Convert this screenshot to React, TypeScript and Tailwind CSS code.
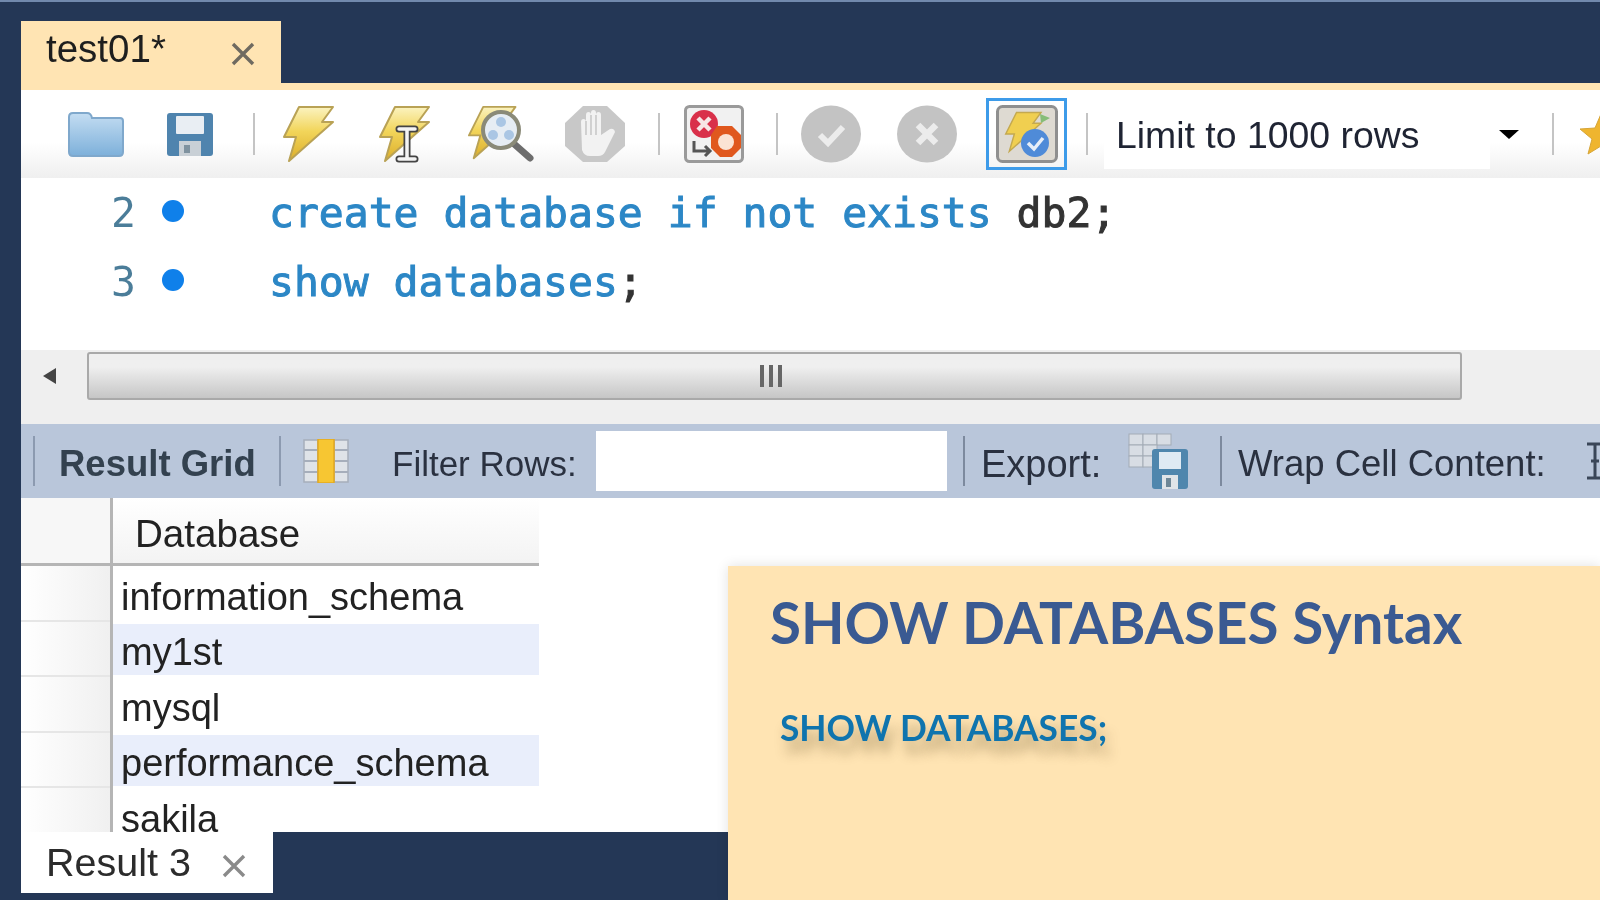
import React from 'react';

const SANS = 'font-["Liberation_Sans",Arial,sans-serif]';

const Sep = ({ ml, h = 'h-[42px]', color = 'bg-[#c4c4c4]' }: { ml: string; h?: string; color?: string }) => (
  <div className={`w-[2px] shrink-0 ${h} ${ml} ${color}`} />
);

const BoltShape = ({ x = 0, y = 0, s = 1 }: { x?: number; y?: number; s?: number }) => (
  <g transform={`translate(${x} ${y}) scale(${s})`}>
    <defs>
      <linearGradient id="boltFill" x1="0" y1="0" x2="0" y2="1">
        <stop offset="0" stopColor="#fbf3c0" />
        <stop offset="0.45" stopColor="#f2d55a" />
        <stop offset="1" stopColor="#dcae2a" />
      </linearGradient>
    </defs>
    <path d="M16 2 L50 2 L39 17 L50 17 L6 56 L13 32 L1 32 Z" fill="url(#boltFill)" stroke="#b9a255" strokeWidth="2" strokeLinejoin="round" />
  </g>
);

const Folder = () => (
  <svg width="58" height="46" viewBox="0 0 58 46" className="shrink-0">
    <defs>
      <linearGradient id="folderFill" x1="0" y1="0" x2="0" y2="1">
        <stop offset="0" stopColor="#c4ddf2" />
        <stop offset="1" stopColor="#7db0da" />
      </linearGradient>
    </defs>
    <path d="M2 6 Q2 2 6 2 L20 2 Q24 2 25 7 L53 7 Q56 7 56 10 L56 41 Q56 45 52 45 L6 45 Q2 45 2 41 Z" fill="url(#folderFill)" stroke="#7fa8cc" strokeWidth="2" />
  </svg>
);

const Save = ({ size = 48 }: { size?: number }) => (
  <svg width={size} height={size - 3} viewBox="0 0 48 45" className="shrink-0">
    <rect x="1" y="1" width="46" height="43" rx="3" fill="#4f84ae" />
    <rect x="10" y="4" width="28" height="18" rx="1" fill="#e9eef3" />
    <rect x="13" y="29" width="22" height="15" fill="#c9d0d6" />
    <rect x="18" y="33" width="6" height="8" fill="#7f929f" />
  </svg>
);

const Bolt = () => (
  <svg width="52" height="58" viewBox="0 0 52 58" className="shrink-0">
    <BoltShape />
  </svg>
);

const BoltCursor = () => (
  <svg width="54" height="58" viewBox="0 0 54 58" className="shrink-0">
    <BoltShape />
    <path d="M20 24 H36 M20 54 H36 M28 24 V54" stroke="#444" strokeWidth="7" strokeLinecap="round" />
    <path d="M20 24 H36 M20 54 H36 M28 24 V54" stroke="#f4f4f4" strokeWidth="3.5" strokeLinecap="round" />
  </svg>
);

const BoltSearch = () => (
  <svg width="66" height="58" viewBox="0 0 66 58" className="shrink-0">
    <BoltShape s={0.95} />
    <path d="M45 38 L62 53" stroke="#6d6d6d" strokeWidth="7" strokeLinecap="round" />
    <circle cx="33" cy="25" r="18" fill="#e6edf4" stroke="#8a8a78" strokeWidth="4" />
    <circle cx="33" cy="17" r="5" fill="#aac6e4" />
    <circle cx="25" cy="30" r="5" fill="#aac6e4" />
    <circle cx="41" cy="30" r="5" fill="#aac6e4" />
  </svg>
);

const HandStop = () => (
  <svg width="62" height="58" viewBox="0 0 62 58" className="shrink-0">
    <path d="M19 1 H43 L61 18 V41 L43 57 H19 L1 41 V18 Z" fill="#c8c8c8" />
    <path d="M17 17 Q17 14 19.5 14 Q22 14 22 17 V10 Q22 7 24.5 7 Q27 7 27 10 V8 Q27 5 29.5 5 Q32 5 32 8 V10 Q32 7 34.5 7 Q37 7 37 10 V30 L46 24 Q50 23 51 27 L41 47 Q39 51 34 51 H26 Q20 51 18 45 Z" fill="#f2f2f2" />
    <path d="M22 16 V30 M27 10 V30 M32 10 V30" stroke="#c8c8c8" strokeWidth="1.6" />
  </svg>
);

const StopOnError = () => (
  <svg width="60" height="58" viewBox="0 0 60 58" className="shrink-0">
    <rect x="1.5" y="1.5" width="57" height="55" rx="4" fill="#f1f1f1" stroke="#9a9a9a" strokeWidth="3" />
    <path d="M10 36 V46 H26 M21 41 L26 46 L21 51" fill="none" stroke="#555" strokeWidth="3" />
    <circle cx="20" cy="19" r="14" fill="#d9304a" />
    <path d="M14 13 L26 25 M26 13 L14 25" stroke="#f7e6e6" strokeWidth="4.5" />
    <path d="M33 21 H48 L57 30 V43 L48 52 H36 L27 43 V30 Z" fill="#e0581e" />
    <circle cx="42" cy="37" r="8" fill="#fbe3d4" />
  </svg>
);

const RoundBtn = ({ kind }: { kind: 'check' | 'x' }) => (
  <svg width="62" height="58" viewBox="0 0 62 58" className="shrink-0">
    <ellipse cx="31" cy="29" rx="30" ry="28.5" fill="#c3c3c3" />
    {kind === 'check' ? (
      <path d="M20 30 L28 38 L43 22" fill="none" stroke="#ececec" strokeWidth="6" />
    ) : (
      <path d="M22 20 L40 38 M40 20 L22 38" stroke="#ececec" strokeWidth="6.5" />
    )}
  </svg>
);

const ToggleAuto = () => (
  <div className="flex h-[72px] w-[81px] shrink-0 items-center justify-center border-[3px] border-[#3d9be9]">
    <svg width="62" height="58" viewBox="0 0 62 58">
      <rect x="1.5" y="1.5" width="59" height="55" rx="5" fill="#dedad2" stroke="#8f8f8f" strokeWidth="3" />
      <g transform="translate(9 6) scale(0.72)">
        <path d="M16 2 L50 2 L39 17 L50 17 L6 56 L13 32 L1 32 Z" fill="#f0cf50" stroke="#c4a94f" strokeWidth="2" />
      </g>
      <path d="M44 9 L54 13 L45 18 Z" fill="#86bd78" />
      <circle cx="39" cy="38" r="14" fill="#4f8bd8" />
      <path d="M32 38 L38 44 L47 33" fill="none" stroke="#e6eef8" strokeWidth="3.5" />
    </svg>
  </div>
);

const GridIcon = () => (
  <svg width="46" height="44" viewBox="0 0 46 44" className="shrink-0">
    <rect x="1" y="1" width="44" height="42" fill="#dfe3e8" stroke="#a6aebb" strokeWidth="1.5" />
    <path d="M1 11 H45 M1 22 H45 M1 33 H45 M15 1 V43 M31 1 V43" stroke="#a6aebb" strokeWidth="2" />
    <rect x="15" y="0" width="16" height="44" fill="#f7c632" stroke="#e4a91f" strokeWidth="1.5" />
  </svg>
);

const ExportIcon = () => (
  <svg width="64" height="57" viewBox="0 0 64 57" className="shrink-0">
    <g fill="#d8dde4" stroke="#a3abb6" strokeWidth="1">
      <rect x="1" y="1" width="14" height="11" /><rect x="15" y="1" width="14" height="11" /><rect x="29" y="1" width="14" height="11" />
      <rect x="1" y="12" width="14" height="11" /><rect x="15" y="12" width="14" height="11" />
      <rect x="1" y="23" width="14" height="11" /><rect x="15" y="23" width="14" height="11" />
    </g>
    <rect x="24" y="16" width="36" height="40" rx="3" fill="#4f86ad" />
    <rect x="31" y="19" width="22" height="17" fill="#dfeaf3" />
    <rect x="34" y="42" width="16" height="14" fill="#dfe4e8" />
    <rect x="38" y="45" width="5" height="9" fill="#6e8797" />
  </svg>
);

const WrapIcon = () => (
  <svg width="24" height="40" viewBox="0 0 24 40" className="shrink-0">
    <path d="M3 3 H19 M3 37 H19 M11 3 V37 M7 20 H15" stroke="#3a4658" strokeWidth="3" fill="none" />
  </svg>
);

const Star = () => (
  <svg width="44" height="44" viewBox="0 0 44 44" className="shrink-0">
    <path d="M22 2 L28 16 L43 17 L31 27 L35 42 L22 34 L9 42 L13 27 L1 17 L16 16 Z" fill="#efb52f" stroke="#d6a538" strokeWidth="1" />
  </svg>
);

const CloseX = ({ color, size }: { color: string; size: number }) => (
  <svg width={size} height={size} viewBox="0 0 24 24" className="shrink-0">
    <path d="M2 2 L22 22 M22 2 L2 22" stroke={color} strokeWidth="3.4" />
  </svg>
);

const rows = [
  { name: 'information_schema', alt: false },
  { name: 'my1st', alt: true },
  { name: 'mysql', alt: false },
  { name: 'performance_schema', alt: true },
  { name: 'sakila', alt: false },
];

export default function App() {
  return (
    <div className={`relative flex h-[900px] w-[1600px] flex-col overflow-hidden bg-[#243756] blur-[0.5px] ${SANS}`}>
      <div className="h-[2px] shrink-0 bg-[#7189ad]" />

      <div className="flex min-h-0 flex-1 flex-col pl-[21px] pt-[19px]">
        {/* document tab */}
        <div className="flex h-[62px] w-[260px] shrink-0 items-center bg-[#ffe4b3] pl-[25px] text-[38.5px] leading-none text-[#1e1e1e]">
          <span className="-mt-[5px] w-[185px]">test01*</span>
          <span className="mt-[4px]"><CloseX color="#6f6a60" size={24} /></span>
        </div>
        <div className="h-[7px] shrink-0 bg-[#ffe4b3]" />

        {/* sql editor toolbar */}
        <div className="flex h-[88px] shrink-0 items-center bg-gradient-to-b from-white from-60% to-[#efefef]">
          <div className="ml-[46px]"><Folder /></div>
          <div className="ml-[41px]"><Save /></div>
          <Sep ml="ml-[39px]" />
          <div className="ml-[28px]"><Bolt /></div>
          <div className="ml-[44px]"><BoltCursor /></div>
          <div className="ml-[35px]"><BoltSearch /></div>
          <div className="ml-[30px]"><HandStop /></div>
          <Sep ml="ml-[32px]" />
          <div className="ml-[24px]"><StopOnError /></div>
          <Sep ml="ml-[32px]" />
          <div className="ml-[22px]"><RoundBtn kind="check" /></div>
          <div className="ml-[34px]"><RoundBtn kind="x" /></div>
          <div className="ml-[28px]"><ToggleAuto /></div>
          <Sep ml="ml-[19px]" />
          <div className="ml-[16px] flex h-[70px] w-[386px] shrink-0 items-center bg-white pl-[12px] pt-[4px] text-[37.4px] leading-none text-[#1f2433]">
            Limit to 1000 rows
          </div>
          <div className="ml-[9px] h-0 w-0 shrink-0 border-x-[10px] border-t-[9px] border-x-transparent border-t-black" />
          <Sep ml="ml-[33px]" />
          <div className="ml-[25px]"><Star /></div>
        </div>

        {/* editor */}
        <div className="h-[172px] shrink-0 bg-white font-['DejaVu_Sans_Mono',monospace] text-[41.4px] leading-[68px] [-webkit-text-stroke:1px]">
          <div className="flex h-[70px] items-center">
            <span className="ml-[90px] w-[24px] text-[#4b7d99] [-webkit-text-stroke:0px]">2</span>
            <span className="-mt-[5px] ml-[27px] h-[22px] w-[22px] rounded-full bg-[#0f80ea]" />
            <span className="ml-[85px] whitespace-pre text-[#2c87c6]">
              create database if not exists <span className="text-[#333]">db2;</span>
            </span>
          </div>
          <div className="flex h-[68px] items-center">
            <span className="ml-[90px] w-[24px] text-[#4b7d99] [-webkit-text-stroke:0px]">3</span>
            <span className="-mt-[5px] ml-[27px] h-[22px] w-[22px] rounded-full bg-[#0f80ea]" />
            <span className="ml-[85px] whitespace-pre text-[#2c87c6]">
              show databases<span className="text-[#333]">;</span>
            </span>
          </div>
        </div>

        {/* horizontal scrollbar */}
        <div className="flex h-[74px] shrink-0 items-center bg-[#efefef] pb-[24px] pt-[2px]">
          <div className="ml-[22px] h-0 w-0 shrink-0 border-y-[8px] border-r-[13px] border-y-transparent border-r-[#444]" />
          <div className="ml-[31px] flex h-[48px] w-[1375px] shrink-0 items-center justify-center gap-[5px] rounded-[3px] border-2 border-[#a9a9a9] bg-gradient-to-b from-[#efefef] from-30% to-[#c6c6c6]">
            <span className="-ml-[8px] h-[22px] w-[4px] bg-[#666]" />
            <span className="h-[22px] w-[4px] bg-[#666]" />
            <span className="h-[22px] w-[4px] bg-[#666]" />
          </div>
        </div>

        {/* result toolbar */}
        <div className="flex h-[74px] shrink-0 items-center bg-[#b9c6da] text-[35px] leading-none text-[#2a3140]">
          <Sep ml="ml-[12px]" h="h-[50px]" color="bg-[#8c9ab0]" />
          <span className="ml-[24px] mt-[6px] w-[196px] shrink-0 whitespace-nowrap text-[36.5px] font-bold text-[#33414f]">Result Grid</span>
          <Sep ml="ml-[24px]" h="h-[50px]" color="bg-[#8c9ab0]" />
          <div className="ml-[22px]"><GridIcon /></div>
          <span className="ml-[43px] mt-[5px] w-[190px] shrink-0">Filter Rows:</span>
          <div className="ml-[14px] h-[60px] w-[351px] shrink-0 bg-white" />
          <Sep ml="ml-[16px]" h="h-[50px]" color="bg-[#7d8a9e]" />
          <span className="ml-[16px] mt-[5px] w-[122px] shrink-0 text-[38px]">Export:</span>
          <div className="ml-[25px]"><ExportIcon /></div>
          <Sep ml="ml-[28px]" h="h-[50px]" color="bg-[#7d8a9e]" />
          <span className="ml-[16px] mt-[6px] w-[320px] shrink-0 whitespace-nowrap text-[36.5px]">Wrap Cell Content:</span>
          <div className="ml-[26px]"><WrapIcon /></div>
        </div>

        {/* result grid */}
        <div className="h-[334px] shrink-0 overflow-hidden bg-white text-[38px] leading-none text-[#222]">
          <div className="flex h-[68px] w-[518px] border-b-[3px] border-[#b5b5b5]">
            <div className="w-[89px] shrink-0 bg-[#f7f7f7]" />
            <div className="flex flex-1 items-center border-l-[3px] border-[#b5b5b5] bg-gradient-to-b from-white to-[#f3f3f3] pl-[22px] pt-[8px] text-[38.6px]">
              Database
            </div>
          </div>
          {rows.map((row) => (
            <div key={row.name} className="flex h-[55.5px] w-[518px]">
              <div className="w-[89px] shrink-0 border-b-2 border-[#e6e6e6] bg-gradient-to-r from-white to-[#f0f0f0]" />
              <div className="flex flex-1 items-center border-l-[3px] border-[#b5b5b5]">
                <div className={`flex h-[51px] w-full items-center pl-[8px] ${row.alt ? 'bg-[#e9eefb]' : ''}`}>
                  <span className="mt-[6px]">{row.name}</span>
                </div>
              </div>
            </div>
          ))}
        </div>

        {/* result tab */}
        <div className="h-[68px] shrink-0">
          <div className="flex h-[61px] w-[252px] items-center bg-white pl-[25px] text-[39.5px] leading-none text-[#2c2c2c]">
            <span className="w-[176px] shrink-0 whitespace-nowrap">Result 3</span>
            <span className="mt-[6px]"><CloseX color="#8a8a8a" size={24} /></span>
          </div>
        </div>
      </div>

      {/* slide overlay */}
      <div className="absolute bottom-0 left-[728px] right-0 top-[566px] bg-[#ffe4b3] font-['Lato',sans-serif] font-bold shadow-[0_0_12px_rgba(0,0,0,0.12)]">
        <div className="ml-[42px] mt-[24px] whitespace-nowrap text-[56.5px] leading-[64px] text-[#3a5a92]">
          SHOW DATABASES Syntax
        </div>
        <div className="ml-[52px] mt-[52px] whitespace-nowrap text-[35.3px] leading-[44px] text-[#0f74ae] [text-shadow:4px_12px_12px_rgba(90,70,30,0.4)]">
          SHOW DATABASES;
        </div>
      </div>
    </div>
  );
}
